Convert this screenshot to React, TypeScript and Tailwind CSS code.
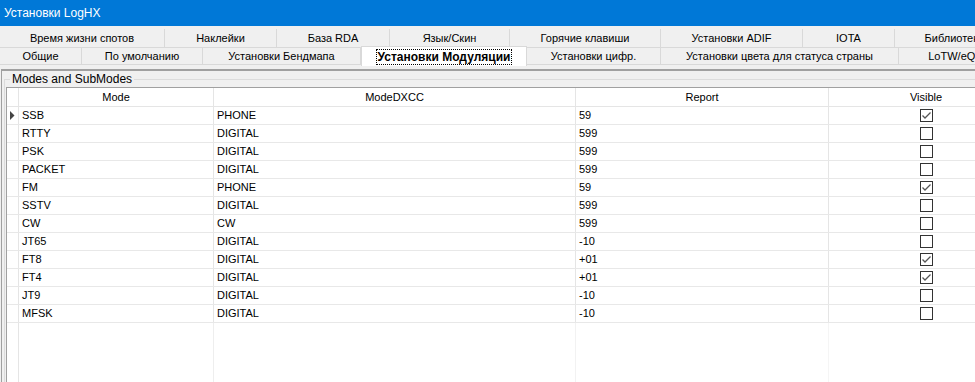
import React from "react";

const row1 = [
  { t: "Время жизни спотов", w: 165 },
  { t: "Наклейки", w: 112 },
  { t: "База RDA", w: 113 },
  { t: "Язык/Скин", w: 120 },
  { t: "Горячие клавиши", w: 151 },
  { t: "Установки ADIF", w: 142 },
  { t: "IOTA", w: 92 },
  { t: "Библиотека", w: 120 },
];

const row2 = [
  { t: "Общие", w: 82 },
  { t: "По умолчанию", w: 121 },
  { t: "Установки Бендмапа", w: 158 },
  { t: "Установки Модуляции", w: 166, sel: true },
  { t: "Установки цифр.", w: 134 },
  { t: "Установки цвета для статуса страны", w: 238 },
  { t: "LoTW/eQSL", w: 120 },
];

const data: [string, string, string, boolean][] = [
  ["SSB", "PHONE", "59", true],
  ["RTTY", "DIGITAL", "599", false],
  ["PSK", "DIGITAL", "599", false],
  ["PACKET", "DIGITAL", "599", false],
  ["FM", "PHONE", "59", true],
  ["SSTV", "DIGITAL", "599", false],
  ["CW", "CW", "599", false],
  ["JT65", "DIGITAL", "-10", false],
  ["FT8", "DIGITAL", "+01", true],
  ["FT4", "DIGITAL", "+01", true],
  ["JT9", "DIGITAL", "-10", false],
  ["MFSK", "DIGITAL", "-10", false],
];

function Check({ on }: { on: boolean }) {
  return (
    <div className="w-[13px] h-[13px] border border-[#333333] bg-white flex items-center justify-center">
      {on && (
        <svg width="11" height="11" viewBox="0 0 11 11">
          <path d="M1.5 5.5 L4 8 L9.5 2.5" fill="none" stroke="#555555" strokeWidth="1.3" />
        </svg>
      )}
    </div>
  );
}

export default function App() {
  return (
    <div
      className="w-[975px] h-[382px] overflow-hidden bg-[#f0f0f0] text-[11px] text-black flex flex-col"
      style={{ fontFamily: '"Liberation Sans", Arial, sans-serif' }}
    >
      <div className="h-[26px] shrink-0 bg-[#0078d7] text-white text-[12px] flex items-center pl-[4px]">
        Установки LogHX
      </div>
      <div className="shrink-0 flex h-[19px] mt-[3px] border-b border-[#d9d9d9] overflow-hidden">
        {row1.map((t) => (
          <div
            key={t.t}
            style={{ width: t.w }}
            className="shrink-0 border-r border-[#d9d9d9] bg-[#f0f0f0] flex items-center justify-center whitespace-nowrap"
          >
            {t.t}
          </div>
        ))}
      </div>
      <div className="shrink-0 flex h-[17px] border-b border-[#d9d9d9]">
        {row2.map((t) =>
          t.sel ? (
            <div
              key={t.t}
              style={{ width: t.w }}
              className="shrink-0 relative z-10 -mt-[2px] h-[20px] bg-white border border-[#d9d9d9] border-b-0 flex items-center justify-center whitespace-nowrap font-bold text-[12px]"
            >
              <span className="border border-dotted border-black px-[1px] leading-[14px]">{t.t}</span>
            </div>
          ) : (
            <div
              key={t.t}
              style={{ width: t.w }}
              className="shrink-0 border-r border-[#d9d9d9] bg-[#f0f0f0] flex items-center justify-center whitespace-nowrap"
            >
              {t.t}
            </div>
          )
        )}
      </div>
      <div className="flex-1 mt-[4px] ml-[1px] border-t-2 border-l border-t-[#a0a0a0] border-l-[#a0a0a0] pl-[2px] pt-[3px] flex flex-col min-h-0">
        <div className="flex-1 border-t border-l border-[#dcdcdc] relative mt-[5px] pl-[1px] pt-[7px] flex flex-col min-h-0">
          <div className="absolute -top-[8px] left-[5px] bg-[#f0f0f0] px-[2px] leading-[14px] text-[12px]">
            Modes and SubModes
          </div>
          <div className="flex-1 bg-white border-t border-l border-[#a0a0a0] flex flex-col min-h-0">
            <div className="flex h-[19px] border-b border-[#e5e5e5] shrink-0">
              <div className="w-[12px] shrink-0 border-r border-[#e5e5e5]" />
              <div className="w-[195px] shrink-0 border-r border-[#e5e5e5] flex items-center justify-center">Mode</div>
              <div className="w-[362px] shrink-0 border-r border-[#e5e5e5] flex items-center justify-center">ModeDXCC</div>
              <div className="w-[253px] shrink-0 border-r border-[#e5e5e5] flex items-center justify-center">Report</div>
              <div className="w-[194px] shrink-0 flex items-center justify-center">Visible</div>
            </div>
            {data.map(([m, d, r, v], i) => (
              <div key={m} className="flex h-[18px] border-b border-[#e8e8e8] shrink-0">
                <div className="w-[12px] shrink-0 border-r border-[#e5e5e5] flex items-center justify-center">
                  {i === 0 && (
                    <svg width="5" height="9" viewBox="0 0 5 9">
                      <path d="M0 0 L4.5 4.5 L0 9 Z" fill="#444444" />
                    </svg>
                  )}
                </div>
                <div className="w-[195px] shrink-0 border-r border-[#e5e5e5] flex items-center pl-[3px]">{m}</div>
                <div className="w-[362px] shrink-0 border-r border-[#e5e5e5] flex items-center pl-[3px]">{d}</div>
                <div className="w-[253px] shrink-0 border-r border-[#e5e5e5] flex items-center pl-[3px]">{r}</div>
                <div className="w-[194px] shrink-0 flex items-center justify-center">
                  <Check on={v} />
                </div>
              </div>
            ))}
            <div className="flex flex-1">
              <div className="w-[12px] shrink-0 border-r border-[#e5e5e5]" />
              <div className="w-[195px] shrink-0 border-r border-[#eeeeee]" />
              <div className="w-[362px] shrink-0 border-r border-[#f2f2f2]" />
              <div className="w-[253px] shrink-0 border-r border-[#f5f5f5]" />
              <div className="w-[194px] shrink-0" />
            </div>
          </div>
        </div>
      </div>
    </div>
  );
}
